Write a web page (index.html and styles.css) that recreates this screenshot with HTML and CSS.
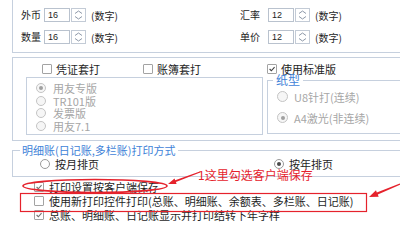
FILE: index.html
```html
<!DOCTYPE html>
<html lang="zh-CN">
<head>
    <meta charset="UTF-8">
    <meta name="viewport" content="width=device-width, initial-scale=1.0">
    <title>打印设置</title>
    <link rel="stylesheet" href="styles.css">
</head>
<body>
    <div class="top-box">
        <div class="num-row">
            <div class="num-field">
                <span class="lbl">外币</span>
                <span class="num-input">16</span>
                <svg class="spin" viewBox="0 0 15 14"><rect x="0.5" y="0.5" width="14" height="13"/><polyline points="4,5.5 7.5,3 11,5.5"/><polyline points="4,8.5 7.5,11 11,8.5"/></svg>
                <span class="hint">(数字)</span>
            </div>
            <div class="num-field right">
                <span class="lbl">汇率</span>
                <span class="num-input">12</span>
                <svg class="spin" viewBox="0 0 15 14"><rect x="0.5" y="0.5" width="14" height="13"/><polyline points="4,5.5 7.5,3 11,5.5"/><polyline points="4,8.5 7.5,11 11,8.5"/></svg>
                <span class="hint">(数字)</span>
            </div>
        </div>
        <div class="num-row">
            <div class="num-field">
                <span class="lbl">数量</span>
                <span class="num-input">16</span>
                <svg class="spin" viewBox="0 0 15 14"><rect x="0.5" y="0.5" width="14" height="13"/><polyline points="4,5.5 7.5,3 11,5.5"/><polyline points="4,8.5 7.5,11 11,8.5"/></svg>
                <span class="hint">(数字)</span>
            </div>
            <div class="num-field right">
                <span class="lbl">单价</span>
                <span class="num-input">12</span>
                <svg class="spin" viewBox="0 0 15 14"><rect x="0.5" y="0.5" width="14" height="13"/><polyline points="4,5.5 7.5,3 11,5.5"/><polyline points="4,8.5 7.5,11 11,8.5"/></svg>
                <span class="hint">(数字)</span>
            </div>
        </div>
    </div>

    <div class="opt-box">
        <div class="chk-row">
            <label class="chk-item voucher"><span class="chk"></span>凭证套打</label>
            <label class="chk-item book"><span class="chk"></span>账簿套打</label>
            <label class="chk-item"><span class="chk on dark"><svg viewBox="0 0 10 10"><polyline points="2,5 4.2,7.2 8.2,2.8"/></svg></span>使用标准版</label>
        </div>
        <div class="panes">
            <div class="pane-left">
                <div class="radio-row off"><span class="radio on"></span>用友专版</div>
                <div class="radio-row off"><span class="radio"></span>TR101版</div>
                <div class="radio-row off"><span class="radio"></span>发票版</div>
                <div class="radio-row off"><span class="radio"></span>用友7.1</div>
            </div>
            <fieldset class="paper">
                <legend>纸型</legend>
                <div class="radio-row off"><span class="radio big"></span>U8针打(连续)</div>
                <div class="radio-row off"><span class="radio big on"></span>A4激光(非连续)</div>
            </fieldset>
        </div>
    </div>

    <fieldset class="mode">
        <legend>明细账(日记账,多栏账)打印方式</legend>
        <div class="mode-row">
            <label class="mode-item month"><span class="radio live"></span>按月排页</label>
            <label class="mode-item"><span class="radio live on"></span>按年排页</label>
        </div>
    </fieldset>

    <div class="checks">
        <label class="check-row"><span class="chk on"><svg viewBox="0 0 10 10"><polyline points="2,5 4.2,7.2 8.2,2.8"/></svg></span>打印设置按客户端保存</label>
        <label class="check-row"><span class="chk"></span>使用新打印控件打印(总账、明细账、余额表、多栏账、日记账)</label>
        <label class="check-row"><span class="chk on"><svg viewBox="0 0 10 10"><polyline points="2,5 4.2,7.2 8.2,2.8"/></svg></span>总账、明细账、日记账显示并打印结转下年字样</label>
    </div>

    <!-- red annotation drawn over the dialog -->
    <svg class="marks" viewBox="0 0 400 230">
        <ellipse cx="95" cy="186" rx="72" ry="6.5"/>
        <rect x="20.5" y="193.5" width="346" height="18"/>
        <polygon class="fill" points="200.2,172.5 175.9,182.1 176.6,184 168,184 174.5,178.4 175.2,180.3 199.8,171.5"/>
        <polygon class="fill" points="400.2,184.6 377.8,194.6 378.7,196.7 369,197 376,190.3 376.8,192.4 399.8,183.4"/>
    </svg>
    <div class="note">1这里勾选客户端保存</div>
</body>
</html>
```

FILE: styles.css
```css
body {
    margin: 0;
    width: 400px;
    height: 230px;
    overflow: hidden;
    position: relative;
    background: #fff;
    color: #1e1e1e;
    font-family: "Noto Sans CJK SC", "Noto Sans", sans-serif;
    font-size: 11px;
    line-height: 13px;
}
label {
    display: flex;
    align-items: center;
}

/* numeric precision box */
.top-box {
    box-sizing: border-box;
    width: 388px;
    height: 53px;
    margin-left: 12px;
    padding: 8px 0 0 8px;
    border-left: 1px solid #c6d0de;
    border-bottom: 1px solid #c6d0de;
    font-size: 10px;
}
.num-row {
    display: flex;
    align-items: center;
    height: 14px;
    margin-bottom: 8px;
}
.num-field {
    display: flex;
    align-items: center;
    width: 219px;
}
.num-field .lbl {
    width: 23px;
    line-height: 14px;
}
.num-field.right {
    width: 140px;
}
.num-field.right .lbl {
    width: 28px;
}
.num-input {
    box-sizing: border-box;
    width: 26px;
    height: 14px;
    padding-left: 3px;
    border: 1px solid #b9c2ce;
    font: 9px/12px "Liberation Sans", sans-serif;
}
.spin {
    display: block;
    width: 15px;
    height: 14px;
    margin-left: 1px;
}
.spin rect {
    fill: #fff;
    stroke: #c3cbd6;
}
.spin polyline {
    fill: none;
    stroke: #8d98a8;
    stroke-width: 1;
}
.hint {
    margin-left: 5px;
}

/* print options */
.opt-box {
    box-sizing: border-box;
    width: 388px;
    height: 84px;
    margin: 4px 0 0 12px;
    padding-left: 13px;
    border: 1px solid #c6d0de;
    border-right: none;
}
.chk-row {
    box-sizing: border-box;
    display: flex;
    align-items: center;
    height: 16px;
    padding-top: 6px;
    line-height: 12px;
}
.chk-item.voucher {
    margin-left: 16px;
    width: 101px;
}
.chk-item.book {
    width: 124px;
}
.chk {
    box-sizing: border-box;
    display: inline-block;
    flex: none;
    width: 10px;
    height: 10px;
    margin-right: 4px;
    border: 1px solid #a3a3a3;
    border-radius: 1px;
    background: #fff;
}
.chk svg {
    display: block;
    width: 8px;
    height: 8px;
}
.chk polyline {
    fill: none;
    stroke: #707070;
    stroke-width: 1.4;
}
.chk.dark polyline {
    stroke: #404040;
}
.panes {
    display: flex;
    align-items: flex-start;
}
.pane-left {
    box-sizing: border-box;
    width: 237px;
    height: 58px;
    margin-top: 3px;
    padding: 4px 0 0 9px;
    border: 1px solid #c6d0de;
}
.radio-row {
    display: flex;
    align-items: center;
    height: 12.5px;
    line-height: 12px;
}
.radio-row.off {
    color: #a6a6a6;
}
.radio {
    box-sizing: border-box;
    display: inline-block;
    flex: none;
    position: relative;
    width: 10px;
    height: 10px;
    margin-right: 7px;
    border: 1px solid #c4c4c4;
    border-radius: 50%;
    background: #f6f6f6;
}
.radio.big {
    width: 11px;
    height: 11px;
    margin-right: 6px;
}
.radio.on::after {
    content: "";
    position: absolute;
    left: 50%;
    top: 50%;
    width: 4px;
    height: 4px;
    margin: -2px 0 0 -2px;
    border-radius: 50%;
    background: #a0a0a0;
}
.radio.live {
    border-color: #9a9a9a;
    background: #fff;
}
.radio.live.on::after {
    background: #4a4a4a;
}
fieldset.paper {
    box-sizing: border-box;
    width: 133px;
    height: 60px;
    margin: 0 0 0 4px;
    padding: 0 0 0 9px;
    border: 1px solid #c6d0de;
    border-right: none;
}
legend {
    padding: 0 3px;
    color: #3f83d8;
    line-height: 12px;
}
.paper legend {
    margin-left: -4px;
    font-size: 12px;
}
.paper .radio-row {
    height: 21px;
}

/* ledger print mode */
fieldset.mode {
    box-sizing: border-box;
    width: 388px;
    height: 33px;
    margin: 3px 0 0 12px;
    padding: 0 0 0 7px;
    border: 1px solid #c6d0de;
    border-right: none;
}
.mode legend {
    padding: 0 2px;
}
.mode-row {
    display: flex;
    align-items: center;
    height: 16px;
}
.mode-item.month {
    width: 234px;
    margin-left: 20px;
}
.mode-item .radio {
    margin-right: 5px;
}

.checks {
    margin-top: 3px;
    padding-left: 34px;
}
.check-row {
    height: 14px;
    line-height: 13px;
}
.check-row .chk {
    margin-right: 5px;
}

/* annotation */
.marks {
    position: absolute;
    left: 0;
    top: 0;
    width: 400px;
    height: 230px;
}
.marks ellipse,
.marks rect {
    fill: none;
    stroke: #e5222c;
    stroke-width: 1.6;
}
.marks rect {
    stroke-width: 1.2;
}
.marks .fill {
    fill: #e5222c;
}
.note {
    position: absolute;
    left: 198px;
    top: 168px;
    color: #e5222c;
    font-size: 12px;
    line-height: 13px;
}
```
